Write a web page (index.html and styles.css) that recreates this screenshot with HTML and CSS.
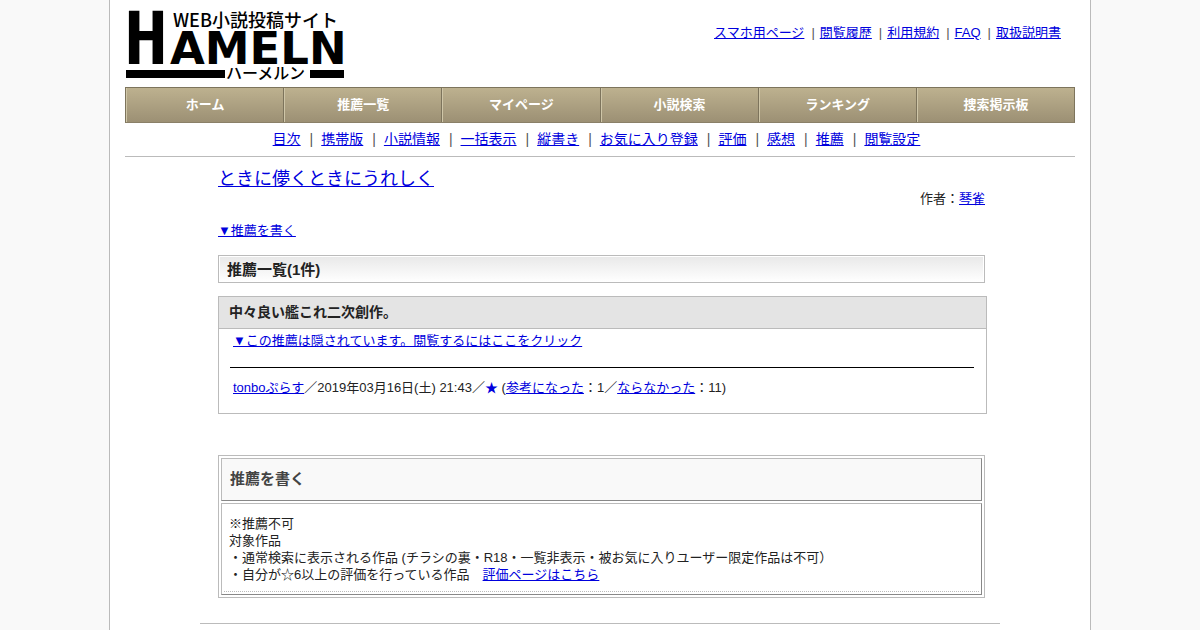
FILE: index.html
```
<!DOCTYPE html>
<html lang="ja">
<head>
  <meta charset="utf-8">
  <title>ときに儚くときにうれしく - ハーメルン</title>
  <link rel="stylesheet" href="styles.css">
</head>
<body>
<div class="wrapper">
  <header class="header">
    <a href="#" class="logo">
      <svg width="220" height="76" viewBox="0 0 220 76" role="img" aria-label="ハーメルン">
        <text class="logo-h" x="-1" y="57">H</text>
        <text class="logo-name" x="45" y="57">AMELN</text>
        <text class="logo-sub" x="48" y="20">WEB小説投稿サイト</text>
        <rect x="1" y="63" width="99" height="8"/>
        <text class="logo-kana" x="101" y="72">ハーメルン</text>
        <rect x="185" y="63" width="34" height="8"/>
      </svg>
    </a>
    <ul class="links">
      <li><a href="#">スマホ用ページ</a></li>
      <li><a href="#">閲覧履歴</a></li>
      <li><a href="#">利用規約</a></li>
      <li><a href="#">FAQ</a></li>
      <li><a href="#">取扱説明書</a></li>
    </ul>
  </header>

  <!-- メインメニュー -->
  <nav class="menu">
    <a href="#">ホーム</a>
    <a href="#">推薦一覧</a>
    <a href="#">マイページ</a>
    <a href="#">小説検索</a>
    <a href="#">ランキング</a>
    <a href="#">捜索掲示板</a>
  </nav>

  <!-- 小説メニュー -->
  <ul class="links novel-menu">
    <li><a href="#">目次</a></li>
    <li><a href="#">携帯版</a></li>
    <li><a href="#">小説情報</a></li>
    <li><a href="#">一括表示</a></li>
    <li><a href="#">縦書き</a></li>
    <li><a href="#">お気に入り登録</a></li>
    <li><a href="#">評価</a></li>
    <li><a href="#">感想</a></li>
    <li><a href="#">推薦</a></li>
    <li><a href="#">閲覧設定</a></li>
  </ul>

  <main class="main">
    <div class="title"><a href="#">ときに儚くときにうれしく</a></div>
    <div class="author">作者：<a href="#">琴雀</a></div>
    <p class="jump"><a href="#write">▼推薦を書く</a></p>

    <h2 class="heading">推薦一覧(1件)</h2>

    <div class="review">
      <h3>中々良い艦これ二次創作。</h3>
      <div class="review-body">
        <p><a href="#">▼この推薦は隠されています。閲覧するにはここをクリック</a></p>
        <hr>
        <p><a href="#">tonboぷらす</a>／2019年03月16日(土) 21:43／<span class="star">★</span> (<a href="#">参考になった</a>：1／<a href="#">ならなかった</a>：11)</p>
      </div>
    </div>

    <div class="write" id="write">
      <h3>推薦を書く</h3>
      <div class="write-body">
        <p>
          ※推薦不可<br>
          対象作品<br>
          ・通常検索に表示される作品 (チラシの裏・R18・一覧非表示・被お気に入りユーザー限定作品は不可）<br>
          ・自分が☆6以上の評価を行っている作品　<a href="#">評価ページはこちら</a>
        </p>
      </div>
    </div>
  </main>
  <footer class="footer"></footer>
</div>
</body>
</html>
```
FILE: styles.css
```
body {
  margin: 0;
  background-color: #f9f9f9;
  color: #222;
  font-family: "Liberation Sans", "Noto Sans CJK JP", sans-serif;
  font-size: 13px;
  line-height: 17px;
}

a {
  color: #0000dd;
}

p {
  margin: 0;
}

.wrapper {
  box-sizing: border-box;
  max-width: 982px;
  min-height: 100vh;
  margin: 0 auto;
  padding: 0 15px;
  background-color: #fff;
  border: 1px solid #bbb;
  border-width: 0 1px;
}

/* ヘッダー */
.header {
  display: flex;
  justify-content: space-between;
  padding: 7px 14px 4px 0;
}

.logo svg {
  display: block;
  overflow: visible;
}

.logo-h {
  font: bold 73px "DejaVu Sans Mono", monospace;
}

.logo-name {
  font: bold 45px "DejaVu Sans", sans-serif;
}

.logo-sub {
  font: 500 18px "Noto Sans CJK JP", sans-serif;
}

.logo-kana {
  font: 500 16px "Noto Sans CJK JP", sans-serif;
}

.links {
  display: flex;
  flex-wrap: wrap;
  margin: 0;
  padding: 0;
  list-style: none;
}

.links li:not(:last-child)::after {
  content: "|";
  margin: 0 5px 0 7px;
  color: #555;
}

.header .links {
  padding-top: 17px;
}

.menu {
  display: flex;
  border: 1px solid #7d745c;
  border-bottom-color: #8a8068;
  background: linear-gradient(#bdb18f, #9c9074);
}

.menu a {
  flex: 1;
  border-left: 1px solid #cfc6a8;
  border-right: 1px solid #7d745c;
  color: #fff;
  font-weight: bold;
  line-height: 34px;
  text-align: center;
  text-decoration: none;
}

.menu a:last-child {
  border-right: none;
}

.novel-menu {
  justify-content: center;
  padding: 8px 7px 8px 0;
  border-bottom: 1px solid #bbb;
  font-size: 14px;
}

.novel-menu li:not(:last-child)::after {
  margin: 0 8px 0 9px;
}

/* 本文 */
.main {
  box-sizing: border-box;
  max-width: 800px;
  margin: 0 auto;
  padding: 11px 13px 25px 18px;
}

.title {
  font-size: 18px;
  line-height: 22px;
}

.author {
  margin-right: 2px;
  text-align: right;
}

.jump {
  margin: 15px 0 16px;
}

.heading {
  margin: 0 2px 13px 0;
  padding: 1px 8px 0;
  border: 1px solid #bbb;
  background: linear-gradient(#e8e8e8, #fff);
  box-shadow: inset 0 0 0 1px #fff;
  font-size: 15px;
  line-height: 25px;
}

.review {
  border: 1px solid #bbb;
}

.review h3 {
  margin: 0;
  padding: 0 10px;
  border-bottom: 1px solid #bbb;
  background-color: #e4e4e4;
  font-size: 14px;
  line-height: 31px;
}

.review-body {
  padding: 3px 11px 17px;
}

.review-body p {
  padding: 0 3px;
}

.review-body hr {
  margin: 18px 1px 11px 0;
  border: none;
  border-top: 1px solid #000;
}

.star {
  color: #0000dd;
}

.write {
  margin: 41px 2px 0 0;
  padding: 2px;
  border: 1px solid #bbb;
}

.write h3,
.write-body {
  border: 1px solid #bbb;
  border-right-color: #888;
  border-bottom-color: #888;
}

.write h3 {
  margin: 0 0 2px;
  padding: 0 8px 2px;
  background-color: #f9f9f9;
  color: #444;
  font-size: 15px;
  line-height: 39px;
}

.write-body {
  padding: 2px;
}

.write-body p {
  padding: 9px 5px 8px;
  border-bottom: 1px dotted #bbb;
}

.footer {
  max-width: 800px;
  margin: 0 auto;
  border-top: 1px solid #bbb;
}
```
